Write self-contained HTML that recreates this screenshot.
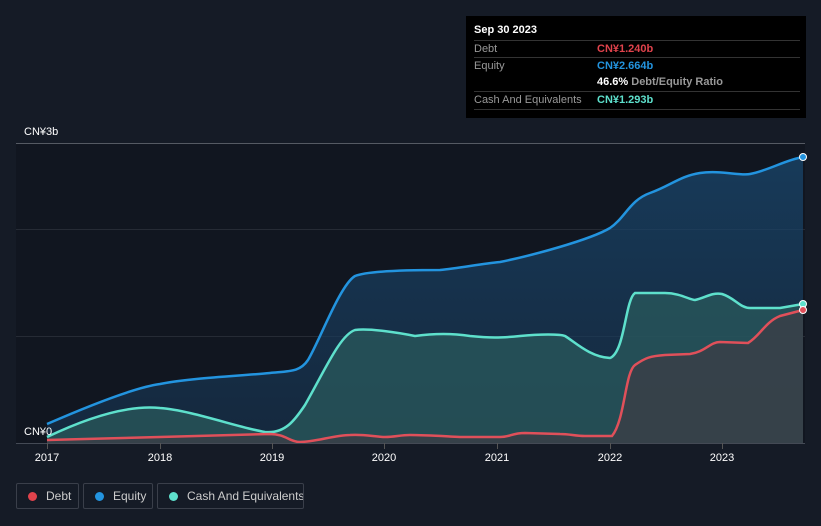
<!DOCTYPE html>
<html><head><meta charset="utf-8"><style>
body{margin:0;width:821px;height:526px;background:#151b26;font-family:"Liberation Sans","Noto Sans CJK SC",sans-serif;overflow:hidden;position:relative;color:#fff}
.tt{position:absolute;left:466px;top:16px;width:340px;height:102px;background:#000;font-size:11px}
.row{position:absolute;left:8px;width:326px;border-top:1px solid #333;height:17px;line-height:17px;color:#999}
.row span{position:absolute;left:123px;font-weight:bold}
.leg{position:absolute;top:483px;height:26px;border:1px solid #3a3f4a;border-radius:2px;font-size:12px;color:#ccc;line-height:24px;box-sizing:border-box;white-space:nowrap;overflow:hidden}
.leg i{display:inline-block;width:9px;height:9px;border-radius:50%;margin:0 9px 0 11px;vertical-align:-1px}
</style></head><body>
<svg width="821" height="526" style="position:absolute;left:0;top:0">
<rect x="16" y="143" width="789" height="300" fill="#111620"/>
<line x1="16" y1="143.5" x2="805" y2="143.5" stroke="#555a63"/>
<line x1="16" y1="229.5" x2="805" y2="229.5" stroke="#262b35"/>
<line x1="16" y1="336.5" x2="805" y2="336.5" stroke="#262b35"/>
<defs>
<linearGradient id="ge" x1="0" y1="0" x2="0" y2="1"><stop offset="0" stop-color="#1a4a72" stop-opacity=".7"/><stop offset="1" stop-color="#173451" stop-opacity=".6"/></linearGradient>
</defs>
<path d="M47,424 C70,414 130,388 160,384 C190,378 240,376 270,373 C290,371 300,372 308,360 C320,340 340,285 355,276 C370,270 420,270 440,270 C460,268 480,264 500,262 C530,256 590,240 610,228 C625,218 630,200 650,193 C670,186 680,176 700,173 C720,170 740,176 750,174 C770,170 785,160 803,157 L803,443 L47,443Z" fill="url(#ge)"/>
<path d="M47,437 C70,426 120,404 160,408 C190,410 240,428 265,432 C285,434 295,420 305,405 C325,370 340,335 355,330 C370,328 400,333 415,336 C430,334 450,333 470,336 C490,338 500,338 520,336 C540,334 560,334 565,336 C575,342 590,357 610,358 C625,352 625,300 635,293 L665,293 C680,293 690,300 695,300 C705,298 712,292 722,294 C735,298 740,308 750,308 L780,308 L803,304 L803,443 L47,443Z" fill="#2a5a5c" fill-opacity=".75"/>
<path d="M47,440 L160,437 L270,434 C285,434 290,442 300,442 C315,442 335,435 350,435 C365,434 375,437 385,437 C395,437 400,435 410,435 C425,435 440,436 460,437 L500,437 C510,437 512,433 525,433 L560,434 C570,434 575,436 585,436 L612,436 C625,420 625,372 635,365 C645,358 650,356 665,355 L690,354 C705,352 710,342 720,342 L748,343 C760,336 765,322 780,316 L803,310 L803,443 L47,443Z" fill="#3a4048" fill-opacity=".85"/>
<path d="M47,424 C70,414 130,388 160,384 C190,378 240,376 270,373 C290,371 300,372 308,360 C320,340 340,285 355,276 C370,270 420,270 440,270 C460,268 480,264 500,262 C530,256 590,240 610,228 C625,218 630,200 650,193 C670,186 680,176 700,173 C720,170 740,176 750,174 C770,170 785,160 803,157" fill="none" stroke="#2394df" stroke-width="2.5"/>
<path d="M47,437 C70,426 120,404 160,408 C190,410 240,428 265,432 C285,434 295,420 305,405 C325,370 340,335 355,330 C370,328 400,333 415,336 C430,334 450,333 470,336 C490,338 500,338 520,336 C540,334 560,334 565,336 C575,342 590,357 610,358 C625,352 625,300 635,293 L665,293 C680,293 690,300 695,300 C705,298 712,292 722,294 C735,298 740,308 750,308 L780,308 L803,304" fill="none" stroke="#5ee0cc" stroke-width="2.5"/>
<path d="M47,440 L160,437 L270,434 C285,434 290,442 300,442 C315,442 335,435 350,435 C365,434 375,437 385,437 C395,437 400,435 410,435 C425,435 440,436 460,437 L500,437 C510,437 512,433 525,433 L560,434 C570,434 575,436 585,436 L612,436 C625,420 625,372 635,365 C645,358 650,356 665,355 L690,354 C705,352 710,342 720,342 L748,343 C760,336 765,322 780,316 L803,310" fill="none" stroke="#e0505a" stroke-width="2.5"/>
<circle cx="803" cy="157" r="3.5" fill="#2394df" stroke="#fff" stroke-width="1"/>
<circle cx="803" cy="304" r="3.5" fill="#5ee0cc" stroke="#fff" stroke-width="1"/>
<circle cx="803" cy="310" r="3.5" fill="#e0505a" stroke="#fff" stroke-width="1"/>
<line x1="16" y1="443.5" x2="805" y2="443.5" stroke="#444a55"/>
<g stroke="#555" ><line x1="47.5" y1="443" x2="47.5" y2="449"/><line x1="160.5" y1="443" x2="160.5" y2="449"/><line x1="272.5" y1="443" x2="272.5" y2="449"/><line x1="384.5" y1="443" x2="384.5" y2="449"/><line x1="497.5" y1="443" x2="497.5" y2="449"/><line x1="610.5" y1="443" x2="610.5" y2="449"/><line x1="722.5" y1="443" x2="722.5" y2="449"/></g>
<g fill="#fff" font-size="11" font-family="Liberation Sans,Noto Sans CJK SC,sans-serif" text-anchor="middle">
<text x="47" y="461">2017</text><text x="160" y="461">2018</text><text x="272" y="461">2019</text><text x="384" y="461">2020</text><text x="497" y="461">2021</text><text x="610" y="461">2022</text><text x="722" y="461">2023</text>
<text x="24" y="135" text-anchor="start">CN¥3b</text><text x="24" y="435" text-anchor="start">CN¥0</text>
</g>
</svg>
<div class="tt">
<div style="position:absolute;left:8px;top:8px;font-weight:bold;color:#fff">Sep 30 2023</div>
<div class="row" style="top:24px">Debt<span style="color:#e0434c">CN¥1.240b</span></div>
<div class="row" style="top:41px">Equity<span style="color:#2394df">CN¥2.664b</span></div>
<div class="row" style="top:58px;border-top:none"><span style="color:#fff">46.6% <b style="color:#999">Debt/Equity Ratio</b></span></div>
<div class="row" style="top:75px">Cash And Equivalents<span style="color:#5ee0cc">CN¥1.293b</span></div>
<div class="row" style="top:93px;height:0"></div>
</div>
<div class="leg" style="left:16px;width:63px"><i style="background:#e0434c"></i>Debt</div>
<div class="leg" style="left:83px;width:70px"><i style="background:#2394df"></i>Equity</div>
<div class="leg" style="left:157px;width:147px"><i style="background:#5ee0cc"></i>Cash And Equivalents</div>
</body></html>
